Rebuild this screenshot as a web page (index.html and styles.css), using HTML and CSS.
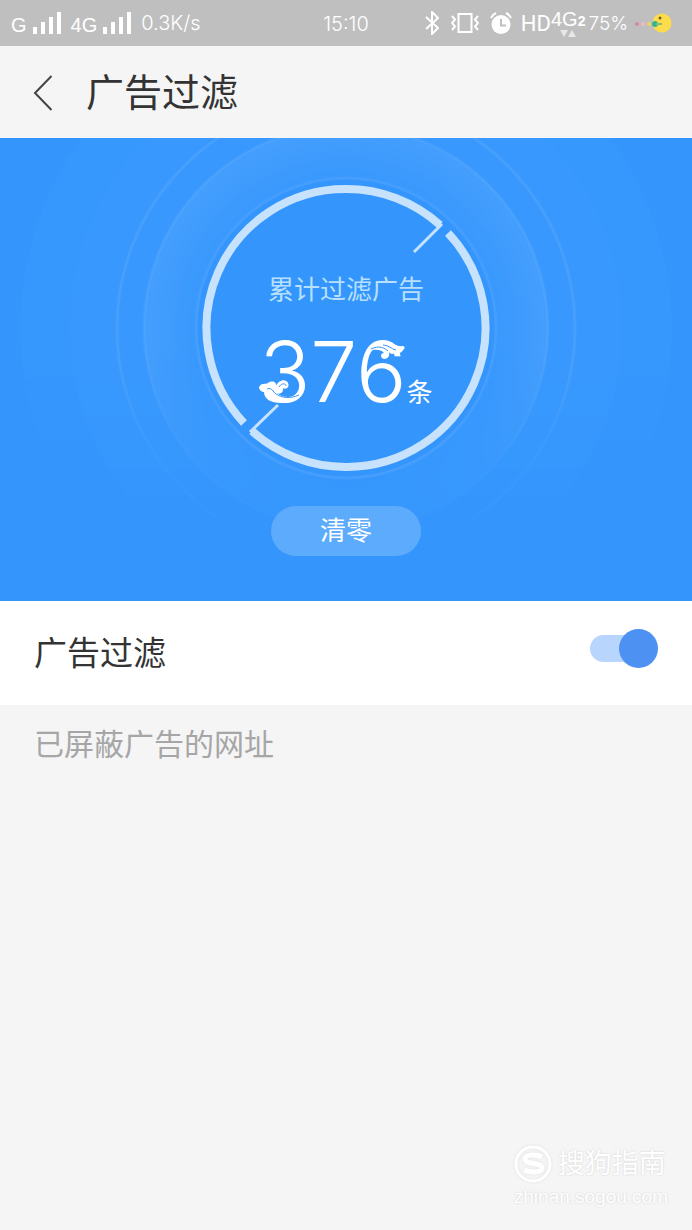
FILE: index.html
```html
<!DOCTYPE html>
<html lang="zh-CN">
<head>
    <meta charset="UTF-8">
    <meta name="viewport" content="width=device-width, initial-scale=1.0">
    <title>广告过滤</title>
    <link rel="stylesheet" href="styles.css">
</head>
<body>
    <div class="status-bar">
        <div class="status-left">
            <span class="network">G</span>
            <svg class="signal" width="28" height="22" viewBox="0 0 28 22" fill="#fff">
                <path d="M0 15h4v7H0zM8 10h4v12H8zM16 5h4v17h-4zM24 0h4v22h-4z"/>
            </svg>
            <span class="network">4G</span>
            <svg class="signal" width="28" height="22" viewBox="0 0 28 22" fill="#fff">
                <path d="M0 15h4v7H0zM8 10h4v12H8zM16 5h4v17h-4zM24 0h4v22h-4z"/>
            </svg>
            <span class="speed">0.3K/s</span>
        </div>
        <div class="clock">15:10</div>
        <div class="status-right">
            <svg width="14" height="24" viewBox="0 0 14 24" fill="none" stroke="#fff" stroke-width="2">
                <path d="M1 6l12 11-6 6V1l6 6L1 18"/>
            </svg>
            <svg class="vibrate" width="28" height="22" viewBox="0 0 28 22" fill="none" stroke="#fff" stroke-width="2">
                <path d="M7.500 2h13v18h-13z"/>
                <path d="M1 4l3 3.500-3 3.500 3 3.500-3 3.500M27 4l-3 3.500 3 3.500-3 3.500 3 3.500"/>
            </svg>
            <svg class="alarm" width="22" height="22" viewBox="0 0 22 22">
                <circle cx="11" cy="12.500" r="9.500" fill="#fff"/>
                <path d="M1 6a10 10 0 0 1 5-5M21 6a10 10 0 0 0-5-5" fill="none" stroke="#fff" stroke-width="2"/>
                <path d="M11 7v6.500h5" fill="none" stroke="#bfbfbf" stroke-width="2"/>
            </svg>
            <span class="hd">HD</span>
            <div class="mobile-data">
                <span>4G<b>2</b></span>
                <svg width="16" height="7" viewBox="0 0 16 7" fill="#e8e8e8">
                    <path d="M0 0h8L4 7zM8 7h8l-4-7z"/>
                </svg>
            </div>
            <span class="percent">75%</span>
            <svg class="battery" width="37" height="20" viewBox="0 0 37 20">
                <circle cx="27" cy="10" r="9.500" fill="#fddc4c"/>
                <circle cx="2" cy="11" r="2" fill="#d9899b"/>
                <circle cx="8" cy="11" r="2" fill="#f3b6c4"/>
                <circle cx="14" cy="11" r="2" fill="#f2d35a"/>
                <circle cx="20" cy="11" r="3" fill="#35b58b"/>
                <path d="M21 11h6" stroke="#7cbf7a" stroke-width="2"/>
                <circle cx="25" cy="5" r="1.500" fill="#7a5a20"/>
            </svg>
        </div>
    </div>

    <header class="title-bar">
        <button class="back" aria-label="返回">
            <svg width="20" height="36" viewBox="0 0 20 36" fill="none" stroke="#444" stroke-width="2">
                <path d="M18.500 1L2 18l16.500 17"/>
            </svg>
        </button>
        <h1>广告过滤</h1>
    </header>

    <section class="hero">
        <svg class="rings" viewBox="0 0 692 463" preserveAspectRatio="xMidYMin slice">
            <defs>
                <linearGradient id="fade" x1="0" y1="0" x2="0" y2="1">
                    <stop offset="0" stop-color="#fff"/>
                    <stop offset="0.450" stop-color="#fff"/>
                    <stop offset="0.860" stop-color="#000"/>
                </linearGradient>
                <mask id="fadeMask">
                    <rect width="692" height="463" fill="url(#fade)"/>
                </mask>
                <radialGradient id="glow">
                    <stop offset="0.740" stop-color="#fff" stop-opacity="0"/>
                    <stop offset="1" stop-color="#fff" stop-opacity="0.060"/>
                </radialGradient>
            </defs>
            <!-- soft halo -->
            <g mask="url(#fadeMask)" fill="#fff">
                <circle cx="346" cy="190" r="326" fill-opacity="0.010"/>
                <circle cx="346" cy="190" r="276" fill-opacity="0.020"/>
                <circle cx="346" cy="190" r="229" fill="none" stroke="#fff" stroke-opacity="0.070" stroke-width="3"/>
                <circle cx="346" cy="190" r="202" fill="url(#glow)" stroke="#fff" stroke-opacity="0.050" stroke-width="3"/>
            </g>
            <circle cx="346" cy="190" r="150" fill="#3496fd" stroke="#459efd" stroke-width="3"/>
            <!-- main ring, split in two -->
            <g fill="none" stroke="#c7e2fd" stroke-width="8">
                <path d="M244 285A139 139 0 0 1 346 51A139 139 0 0 1 440 87"/>
                <path d="M448 95A139 139 0 0 1 346 329A139 139 0 0 1 252 293"/>
                <path d="M442 86L414 114M250 294L278 267" stroke-width="3"/>
            </g>
        </svg>
        <div class="summary">
            <p class="summary-label">累计过滤广告</p>
            <div class="count">
                <span class="number">376</span><span class="unit">条</span>
                <svg class="cloud cloud-low" width="44" height="26" viewBox="0 0 44 26">
                    <path d="M0 9c3-5 6-2 9-4 4-3 9-1 8 3 2-6 10-8 12-3 2 4-2 7-5 5 1 4-3 7-6 5 5 5 14 5 25 1-5 7-13 9-21 9C12 25 5 21 5 14 3 14 0 12 0 9z" fill="#fff"/>
                    <path d="M8 11c5-2 6 3 9 5 6 4 14 5 23 1M20 9c2-4 7-4 7-1" fill="none" stroke="#3496fd" stroke-width="1"/>
                </svg>
                <svg class="cloud cloud-high" width="38" height="19" viewBox="0 0 38 19">
                    <path d="M0 10C7 2 14 0 21 1c6 1 9 5 15 4 2 0 2 3 0 4-1 3-5 4-8 2-1 3-5 2-6 0 1 4-1 7-5 7-4-1-4-6 0-6-3-4-9-4-17-2z" fill="#fff"/>
                    <path d="M4 8c8-4 14-1 17 2M16 4c6 0 8 4 13 5" fill="none" stroke="#3496fd" stroke-width="1"/>
                </svg>
            </div>
        </div>
        <button class="clear">清零</button>
    </section>

    <div class="setting">
        <label for="adFilter">广告过滤</label>
        <input type="checkbox" id="adFilter" class="switch" checked>
    </div>

    <h2 class="list-title">已屏蔽广告的网址</h2>

    <footer class="watermark">
        <div class="brand">
            <svg width="38" height="38" viewBox="0 0 38 38" fill="none" stroke="#fff">
                <circle cx="19" cy="19" r="17" stroke-width="3"/>
                <path d="M28 12c-5-3-17-3-17 2 0 6 17 3 17 9 0 5-12 5-18 2" stroke-width="5"/>
            </svg>
            <span>搜狗指南</span>
        </div>
        <div class="site">zhinan.sogou.com</div>
    </footer>
</body>
</html>
```

FILE: styles.css
```css
* {
    margin: 0;
    padding: 0;
    box-sizing: border-box;
}
body {
    font-family: Roboto, 'Noto Sans CJK SC', sans-serif;
    background-color: #f5f5f5;
    color: #333;
    display: flex;
    flex-direction: column;
    min-height: 100vh;
}
button {
    border: none;
    background: none;
    font-family: inherit;
    cursor: pointer;
}
svg {
    display: block;
    flex-shrink: 0;
}

/* Status bar */
.status-bar {
    display: grid;
    grid-template-columns: 1fr auto 1fr;
    align-items: center;
    height: 46px;
    padding: 0 11px;
    background-color: #bfbfbf;
    color: #fff;
    font-family: 'Liberation Sans', sans-serif;
    font-size: 20px;
    white-space: nowrap;
}
.status-left, .status-right {
    display: flex;
    align-items: center;
}
.status-left {
    gap: 6px;
}
.status-left .network {
    padding-top: 4px;
}
.signal + .network {
    margin-left: 4px;
}
.speed {
    font-family: Inter, sans-serif;
    font-weight: 300;
    margin-left: 4px;
}
.clock {
    font-family: Inter, sans-serif;
    font-weight: 300;
    padding-top: 2px;
}
.status-right {
    justify-content: flex-end;
    padding-right: 9px;
}
.vibrate {
    margin-left: 12px;
}
.alarm {
    margin-left: 11px;
}
.hd {
    font-family: Roboto, sans-serif;
    font-size: 22px;
    margin-left: 9px;
}
.mobile-data {
    display: flex;
    flex-direction: column;
    align-items: center;
    line-height: 18px;
}
.mobile-data b {
    font-size: 14px;
}
.percent {
    font-family: Inter, sans-serif;
    font-size: 19px;
    font-weight: 300;
    margin-left: 3px;
}
.battery {
    margin-left: 7px;
}

/* Title bar */
.title-bar {
    display: flex;
    align-items: center;
    gap: 33px;
    height: 92px;
    padding: 2px 33px 0;
}
.title-bar h1 {
    font-size: 38px;
    font-weight: 400;
    line-height: 48px;
}

/* Hero */
.hero {
    position: relative;
    display: flex;
    flex-direction: column;
    align-items: center;
    padding: 132px 0 45px;
    background-color: #3496fd;
    color: #fff;
}
.rings {
    position: absolute;
    top: 0;
    left: 0;
    width: 100%;
    height: 100%;
}
.summary {
    position: relative;
    text-align: center;
}
.summary-label {
    font-size: 26px;
    line-height: 40px;
    color: #b8e0fd;
}
.count {
    position: relative;
    display: flex;
    align-items: baseline;
    justify-content: center;
    height: 100px;
    margin-top: 12px;
    line-height: 100px;
}
.number {
    font-family: Inter, sans-serif;
    font-size: 84px;
    font-weight: 300;
}
.unit {
    font-size: 26px;
}
.cloud {
    position: absolute;
}
.cloud-low {
    left: 0;
    top: 56px;
}
.cloud-high {
    left: 108px;
    top: 19px;
}
.clear {
    position: relative;
    width: 150px;
    height: 50px;
    margin-top: 84px;
    border-radius: 25px;
    background-color: #5dabfc;
    color: #fff;
    font-size: 26px;
    line-height: 50px;
}

/* Setting row */
.setting {
    display: flex;
    justify-content: space-between;
    align-items: flex-start;
    padding: 28px 34px 26px;
    background-color: #fff;
}
.setting label {
    font-size: 33px;
    line-height: 50px;
}
.switch {
    appearance: none;
    position: relative;
    width: 68px;
    height: 39px;
    cursor: pointer;
}
.switch::before {
    content: '';
    position: absolute;
    left: 0;
    top: 6px;
    width: 60px;
    height: 27px;
    border-radius: 14px;
    background-color: #ddd;
}
.switch::after {
    content: '';
    position: absolute;
    left: 0;
    top: 0;
    width: 39px;
    height: 39px;
    border-radius: 50%;
    background-color: #aaa;
}
.switch:checked::before {
    background-color: #b8d6fd;
}
.switch:checked::after {
    left: auto;
    right: 0;
    background-color: #4d92f3;
}

.list-title {
    padding: 18px 34px;
    font-size: 30px;
    font-weight: 400;
    line-height: 44px;
    color: #a6a6a6;
}

/* Watermark */
.watermark {
    align-self: flex-end;
    margin-top: auto;
    padding: 0 24px 20px;
    color: #fff;
    text-shadow: 0 0 2px #ccc;
}
.watermark svg {
    filter: drop-shadow(0 0 1px #ddd);
}
.brand {
    display: flex;
    align-items: center;
    gap: 6px;
    font-size: 27px;
    line-height: 40px;
}
.site {
    font-family: 'Liberation Sans', sans-serif;
    font-size: 19px;
    line-height: 26px;
}
```
